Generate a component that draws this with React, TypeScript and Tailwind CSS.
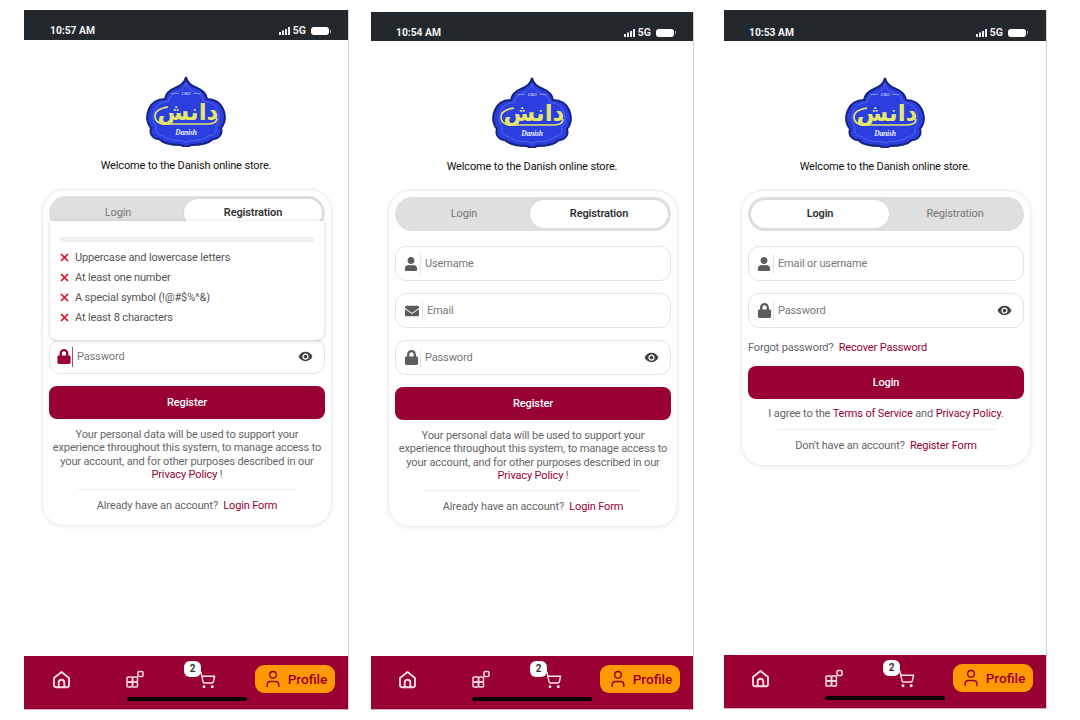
import React from "react";
import { FaUser, FaEnvelope, FaLock } from "react-icons/fa";
import { MdRemoveRedEye } from "react-icons/md";
import { ShoppingCart, User } from "lucide-react";

function Logo() {
  const d =
    "M40 1 C41 7 46 10 51 12 C56 14 60 17 61 23 C68 23 74 26 77 33 C80 40 79 47 75 52 C77 58 73 63 67 63 C62 68 52 69 45 69 C42 71 38 71 35 69 C28 69 18 68 13 63 C7 63 3 58 5 52 C1 47 0 40 3 33 C6 26 12 23 19 23 C20 17 24 14 29 12 C34 10 39 7 40 1 Z";
  return (
    <svg width="80" height="71" viewBox="0 0 80 71" className="block">
      <path d={d} fill="#2b3fe0" stroke="#15247f" strokeWidth="2" />
      <path d={d} fill="none" stroke="#6f86f0" strokeWidth="0.6" transform="translate(6 6) scale(0.85)" />
      <text x="40" y="19" textAnchor="middle" fontSize="5" fill="#e8edff" fontFamily="'Liberation Serif', serif" fontStyle="italic">1963</text>
      <path d="M25 17.5h8M47 17.5h8" stroke="#c9d2ff" strokeWidth="0.5" />
      <path d="M22 31 Q9 33 9 40 Q9 48 20 48 H62 Q71 48 71 42" fill="none" stroke="#e6e86a" strokeWidth="1.6" />
      <text x="42" y="44" textAnchor="middle" fontSize="23" fontWeight="700" fill="#e6e86a" fontFamily="'DejaVu Sans', 'Noto Sans', sans-serif">دانش</text>
      <text x="40" y="59" textAnchor="middle" fontSize="7.5" fontWeight="700" fontStyle="italic" fill="#eef0ff" fontFamily="'Liberation Serif', serif">Danish</text>
    </svg>
  );
}

function StatusBar({ time, cls }: { time: string; cls: string }) {
  return (
    <div className={`flex items-center justify-between bg-[#23282d] tracking-normal ${cls}`}>
      <span className="text-[10.3px] font-bold text-[#f2f2f2]">{time}</span>
      <div className="flex items-center">
        <svg width="12" height="8" viewBox="0 0 12 8" className="mr-[2px]">
          <rect x="0" y="5" width="2" height="3" fill="#eee" />
          <rect x="3" y="3.5" width="2" height="4.5" fill="#eee" />
          <rect x="6" y="2" width="2" height="6" fill="#eee" />
          <rect x="9" y="0" width="2" height="8" fill="#eee" />
        </svg>
        <span className="mr-[5px] text-[10.5px] font-bold text-[#eeeeee]">5G</span>
        <span className="h-[8px] w-[18px] rounded-[3px] bg-white" />
        <span className="ml-[1px] h-[3px] w-[1px] bg-[#aaaaaa]" />
      </div>
    </div>
  );
}

function Tabs({ active }: { active: "login" | "reg" }) {
  const on = "w-[138px] h-[28px] rounded-full bg-white flex items-center justify-center text-[#333] font-semibold text-[11px] shadow-[0_0_2px_#cccccc]";
  const off = "flex-1 h-[28px] flex items-center justify-center text-[#777777] text-[11px]";
  return (
    <div className="flex h-[34px] items-center rounded-full bg-[#dfdfdf] px-[3px]">
      <div className={active === "login" ? on : off}>Login</div>
      <div className={active === "reg" ? on : off}>Registration</div>
    </div>
  );
}

function Field({ icon, label, eye, iconW = "w-[16px]", red }: { icon: React.ReactNode; label: string; eye?: boolean; iconW?: string; red?: boolean }) {
  return (
    <div className="flex h-[35px] items-center rounded-[11px] border border-[#e4e4e4] bg-white pl-[7px] pr-[11px]">
      <div className={`flex items-center justify-center ${iconW} ${red ? "text-[#990033]" : "text-[#5c5c5c]"}`}>{icon}</div>
      <div className={`ml-[1px] h-[20px] w-px ${red ? "bg-[#b8446e]" : "bg-[#e6e6e6]"}`} />
      <span className="ml-[4px] flex-1 pt-[2px] text-[11px] text-[#777777]">{label}</span>
      {eye && <MdRemoveRedEye className="h-[15px] w-[15px] text-[#444444]" />}
    </div>
  );
}

function PrimaryButton({ label }: { label: string }) {
  return (
    <div className="flex h-[33px] items-center justify-center rounded-[8px] bg-[#990033] pt-[2px] text-[11px] font-medium text-white">{label}</div>
  );
}

function Link({ children }: { children: React.ReactNode }) {
  return <span className="text-[#990033]">{children}</span>;
}

function Divider() {
  return <div className="mx-auto h-px w-[218px] bg-[#ececec]" />;
}

function Popover() {
  const items = ["Uppercase and lowercase letters", "At least one number", "A special symbol (!@#$%^&)", "At least 8 characters"];
  return (
    <div className="absolute left-[7px] right-[7px] top-[31px] h-[119px] rounded-b-[8px] bg-white px-[10px] pt-[16px] shadow-[0_1px_4px_rgba(0,0,0,0.2)]">
      <div className="h-[5px] rounded-full bg-[#eeeeee]" />
      <div className="mt-[6px] flex flex-col">
        {items.map((t) => (
          <div key={t} className="flex h-[20px] items-center text-[11px] text-[#555555]">
            <svg width="9" height="9" viewBox="0 0 9 9" className="mb-[2px] mr-[6px]">
              <path d="M1 1l7 7M8 1l-7 7" stroke="#e01020" strokeWidth="1.7" />
            </svg>
            {t}
          </div>
        ))}
      </div>
    </div>
  );
}

function RegisterCard({ popover }: { popover?: boolean }) {
  return (
    <div className="relative h-[337px] rounded-[22px] border border-[#ececec] bg-white px-[6px] pt-[6px] shadow-[0_1px_5px_rgba(0,0,0,0.07)]">
      <Tabs active="reg" />
      <div className="mt-[15px] flex flex-col gap-[12px]">
        {popover ? (
          <div className="h-[82px]" />
        ) : (
          <>
            <Field icon={<FaUser size={14} />} label="Username" />
            <Field icon={<FaEnvelope size={14} />} label="Email" iconW="w-[18px]" />
          </>
        )}
        <Field icon={<FaLock size={15} />} label="Password" eye iconW={popover ? "w-[14px]" : "w-[16px]"} red={popover} />
      </div>
      {popover && <Popover />}
      <div className="mt-[12px]">
        <PrimaryButton label="Register" />
      </div>
      <p className="mt-[9px] text-center text-[11px] leading-[13.3px] text-[#666666]">
        Your personal data will be used to support your experience throughout this system, to manage access to your account, and for other purposes described in our <br />
        <Link>Privacy Policy</Link> !
      </p>
      <div className="mt-[8px]">
        <Divider />
      </div>
      <p className="mt-[8px] text-center text-[11px] leading-[16px] text-[#666666]">
        Already have an account?&nbsp; <Link>Login Form</Link>
      </p>
    </div>
  );
}

function LoginCard() {
  return (
    <div className="h-[276px] rounded-[22px] border border-[#ececec] bg-white px-[6px] pt-[6px] shadow-[0_1px_5px_rgba(0,0,0,0.07)]">
      <Tabs active="login" />
      <div className="mt-[15px] flex flex-col gap-[12px]">
        <Field icon={<FaUser size={14} />} label="Email or username" />
        <Field icon={<FaLock size={15} />} label="Password" eye />
      </div>
      <p className="mt-[12px] text-[11px] leading-[16px] text-[#666666]">
        Forgot password?&nbsp; <Link>Recover Password</Link>
      </p>
      <div className="mt-[10px]">
        <PrimaryButton label="Login" />
      </div>
      <p className="mt-[7px] text-center text-[11px] leading-[16px] text-[#666666]">
        I agree to the <Link>Terms of Service</Link> and <Link>Privacy Policy</Link>.
      </p>
      <div className="mt-[7px]">
        <Divider />
      </div>
      <p className="mt-[8px] text-center text-[11px] leading-[16px] text-[#666666]">
        Don't have an account?&nbsp; <Link>Register Form</Link>
      </p>
    </div>
  );
}

function BottomNav({ pl, profileMl, barLeft }: { pl: string; profileMl: string; barLeft: string }) {
  return (
    <div className={`relative flex h-[54px] items-center border-b border-[#d9b3c2] bg-[#990033] pb-[7px] tracking-normal ${pl}`}>
      <svg width="19" height="19" viewBox="0 0 19 19" fill="none" stroke="#f6dbe5" strokeWidth="1.9" strokeLinejoin="round">
        <path d="M2 8 L9.5 2 L17 8 V15 Q17 17.2 15 17.2 H4 Q2 17.2 2 15 Z" />
        <path d="M6.7 17V12.5 Q6.7 9.8 9.5 9.8 Q12.3 9.8 12.3 12.5V17" />
      </svg>
      <svg width="18" height="18" viewBox="0 0 18 18" fill="none" stroke="#f6dbe5" strokeWidth="1.5" className="ml-[55px]">
        <rect x="1" y="7" width="5.5" height="5" rx="1" />
        <rect x="6.5" y="7" width="5" height="5" rx="1" />
        <rect x="1" y="12" width="5.5" height="5" rx="1" />
        <rect x="6.5" y="12" width="5" height="5" rx="1" />
        <rect x="12" y="1.5" width="5" height="5" rx="1" />
      </svg>
      <div className="relative ml-[54px] mt-[1px]">
        <ShoppingCart size={18} strokeWidth={1.9} className="text-[#fbe9ef]" />
        <span className="absolute left-[-14px] top-[-10px] flex h-[16px] w-[17px] items-center justify-center rounded-[6px] bg-white text-[10px] font-bold text-[#333]">2</span>
      </div>
      <div className={`flex h-[28px] w-[80px] items-center justify-center gap-[5px] rounded-[9px] bg-[#ff9900] text-[13.6px] font-medium text-[#990033] ${profileMl}`}>
        <User size={20} strokeWidth={1.7} />
        Profile
      </div>
      <div className={`absolute bottom-[8px] h-[4px] w-[120px] rounded-full bg-black ${barLeft}`} />
    </div>
  );
}

function Phone({
  time,
  className,
  barCls,
  children,
  cardMl,
  navPl,
  profileMl,
  barLeft,
}: {
  time: string;
  className: string;
  barCls: string;
  children: React.ReactNode;
  cardMl: string;
  navPl: string;
  profileMl: string;
  barLeft: string;
}) {
  return (
    <div className={`flex flex-col border-r border-[#d4d4d4] bg-white ${className}`}>
      <StatusBar time={time} cls={barCls} />
      <div className="flex-1">
        <div className="mt-[36px] flex justify-center">
          <Logo />
        </div>
        <p className="mt-[11px] text-center text-[11px] leading-[16px] text-[#111111]">Welcome to the Danish online store.</p>
        <div className={`mt-[15px] w-[290px] ${cardMl}`}>{children}</div>
      </div>
      <BottomNav pl={navPl} profileMl={profileMl} barLeft={barLeft} />
    </div>
  );
}

export default function App() {
  return (
    <div className="flex h-[720px] w-[1080px] items-start overflow-hidden bg-white pl-[24px] font-['Roboto',sans-serif] tracking-[-0.14px]">
      <Phone time="10:57 AM" className="mt-[10px] h-[700px] w-[325px]" barCls="h-[30px] pl-[26px] pr-[17px] pt-[12px]" cardMl="ml-[18px]" navPl="pl-[28px]" profileMl="ml-[39px]" barLeft="left-[103px]">
        <RegisterCard popover />
      </Phone>
      <Phone time="10:54 AM" className="ml-[22px] mt-[12px] h-[698px] w-[323px]" barCls="h-[29px] pl-[25px] pr-[17px] pt-[12px]" cardMl="ml-[17px]" navPl="pl-[27px]" profileMl="ml-[38px]" barLeft="left-[101px]">
        <RegisterCard />
      </Phone>
      <Phone time="10:53 AM" className="ml-[30px] mt-[10px] h-[699px] w-[323px]" barCls="h-[31px] pl-[25px] pr-[18px] pt-[14px]" cardMl="ml-[17px]" navPl="pl-[27px]" profileMl="ml-[38px]" barLeft="left-[101px]">
        <LoginCard />
      </Phone>
    </div>
  );
}
